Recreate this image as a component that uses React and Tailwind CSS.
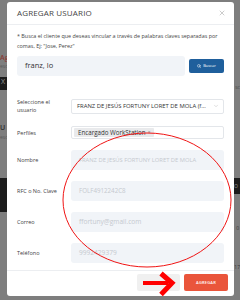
import { Search, X, ChevronDown } from "lucide-react";

const font = { fontFamily: '"Open Sans", "Noto Sans", sans-serif' };

function Row({ label, children, className = "" }) {
  return (
    <div className={`flex items-center ${className}`}>
      <div className="w-[54px] shrink-0 text-[5.5px] leading-[8px] text-[#3f3f46]">{label}</div>
      <div className="flex-1 min-w-0">{children}</div>
    </div>
  );
}

function ReadOnly({ value, size = "text-[6.6px]" }) {
  return (
    <div className={`h-[20px] rounded-[3px] bg-[#f1f4f8] px-[8px] flex items-center ${size} text-[#c5c9cf] truncate`}>
      {value}
    </div>
  );
}

export default function App() {
  return (
    <div className="relative w-[240px] h-[300px] overflow-hidden bg-[#7e7e7e]" style={font}>
      {/* page behind the overlay */}
      <div className="absolute left-0 top-[53px] text-[7px] font-semibold text-[#8a3a36]">Ag</div>
      <div className="absolute left-0 top-[63px] text-[5px] text-[#5a5a5a]">esc</div>
      <div className="absolute left-0 top-[77px] w-[8px] h-[13px] bg-[#1c1c1c] text-[7px] text-[#9a9a9a] pl-[1px]">X</div>
      <div className="absolute left-0 top-[123px] text-[7px] font-semibold text-[#2e2e2e]">U</div>
      <div className="absolute left-0 top-[134px] text-[5px] text-[#5a5a5a]">esc</div>
      <div className="absolute left-0 top-[178px] w-[8px] h-[34px] bg-[#1c1c1c]" />
      <div className="absolute right-0 top-[84px] text-[5px] text-[#4a4a4a]">sc</div>
      <div className="absolute right-0 top-[178px] w-[8px] h-[16px] bg-[#1c1c1c] text-[5px] text-[#9a9a9a] pl-[2px] pt-[5px]">O</div>
      <div className="absolute right-[1px] top-[225px] text-[5px] text-[#3a3a3a]">0</div>
      <div className="absolute right-0 top-[264px] text-[5px] text-[#3a3a3a]">17</div>

      {/* modal */}
      <div className="relative ml-[7px] mt-[2px] w-[227px] h-[294px] rounded-[3px] bg-white flex flex-col">
        <div className="h-[23px] flex items-center justify-between pl-[10px] pr-[8px] border-b border-[#eceef1]">
          <span className="text-[8px] text-[#444] tracking-[0.15px]">AGREGAR USUARIO</span>
          <X size={8} strokeWidth={1.5} className="text-[#999]" />
        </div>

        <div className="flex-1 px-[10px]">
          <p className="mt-[6px] text-[5.4px] leading-[10px] text-[#444]">
            * Busca el cliente que deseas vincular a través de palabras claves separadas por comas, Ej: "Jose, Perez"
          </p>

          <div className="mt-[5px] flex items-center gap-[4px]">
            <div className="flex-1 h-[20px] rounded-[3px] bg-[#f1f4f8] px-[8px] flex items-center text-[7.5px] text-[#333]">
              franz, lo
            </div>
            <button className="w-[35px] h-[14px] rounded-[2px] bg-[#1f5f9c] flex items-center justify-center gap-[2px] text-[4px] text-white">
              <Search size={4} strokeWidth={3} />
              Buscar
            </button>
          </div>

          <Row label={<>Seleccione el<br />usuario</>} className="mt-[22px]">
            <div className="h-[15px] rounded-[2px] border border-[#e3e6ea] pl-[5px] pr-[4px] flex items-center gap-[3px]">
              <span className="flex-1 min-w-0 whitespace-nowrap text-[5.9px] text-[#333]">FRANZ DE JESÚS FORTUNY LORET DE MOLA (f…</span>
              <ChevronDown size={6} strokeWidth={1.5} className="text-[#aaa] shrink-0" />
            </div>
          </Row>

          <Row label="Perfiles" className="mt-[12px]">
            <div className="h-[13px] rounded-[2px] border border-[#e3e6ea] px-[2px] flex items-center">
              <span className="h-[9px] px-[4px] rounded-[1px] bg-[#e9eaec] flex items-center gap-[2px] text-[6.2px] text-[#333]">
                Encargado WorkStation <span className="text-[5px] text-[#777]">×</span>
              </span>
            </div>
          </Row>

          <Row label="Nombre" className="mt-[11px]">
            <ReadOnly value="FRANZ DE JESÚS FORTUNY LORET DE MOLA" size="text-[5.8px]" />
          </Row>
          <Row label="RFC o No. Clave" className="mt-[11px]">
            <ReadOnly value="FOLF4912242C8" size="text-[6.2px]" />
          </Row>
          <Row label="Correo" className="mt-[11px]">
            <ReadOnly value="ffortuny@gmail.com" />
          </Row>
          <Row label="Teléfono" className="mt-[11px]">
            <ReadOnly value="9992429379" />
          </Row>
        </div>

        <div className="h-[26px] border-t border-[#eceef1] flex items-center justify-end gap-[4px] pr-[6px] pb-[2px]">
          <button className="w-[43px] h-[17px] rounded-[2px] bg-[#f0f0f0]" />
          <button className="w-[44px] h-[17px] rounded-[2px] bg-[#ea553b] text-[4px] font-semibold text-white tracking-[0.2px]">
            AGREGAR
          </button>
        </div>
      </div>

      {/* annotation */}
      <svg className="absolute inset-0 pointer-events-none" width="240" height="300" viewBox="0 0 240 300">
        <ellipse cx="147" cy="200" rx="84" ry="67" fill="none" stroke="#f01414" strokeWidth="1" />
        <path d="M143 283 H168" stroke="#ff0000" strokeWidth="4" />
        <path d="M161 273.5 L172 283 L161 294.5" fill="none" stroke="#ff0000" strokeWidth="5" />
      </svg>
    </div>
  );
}
